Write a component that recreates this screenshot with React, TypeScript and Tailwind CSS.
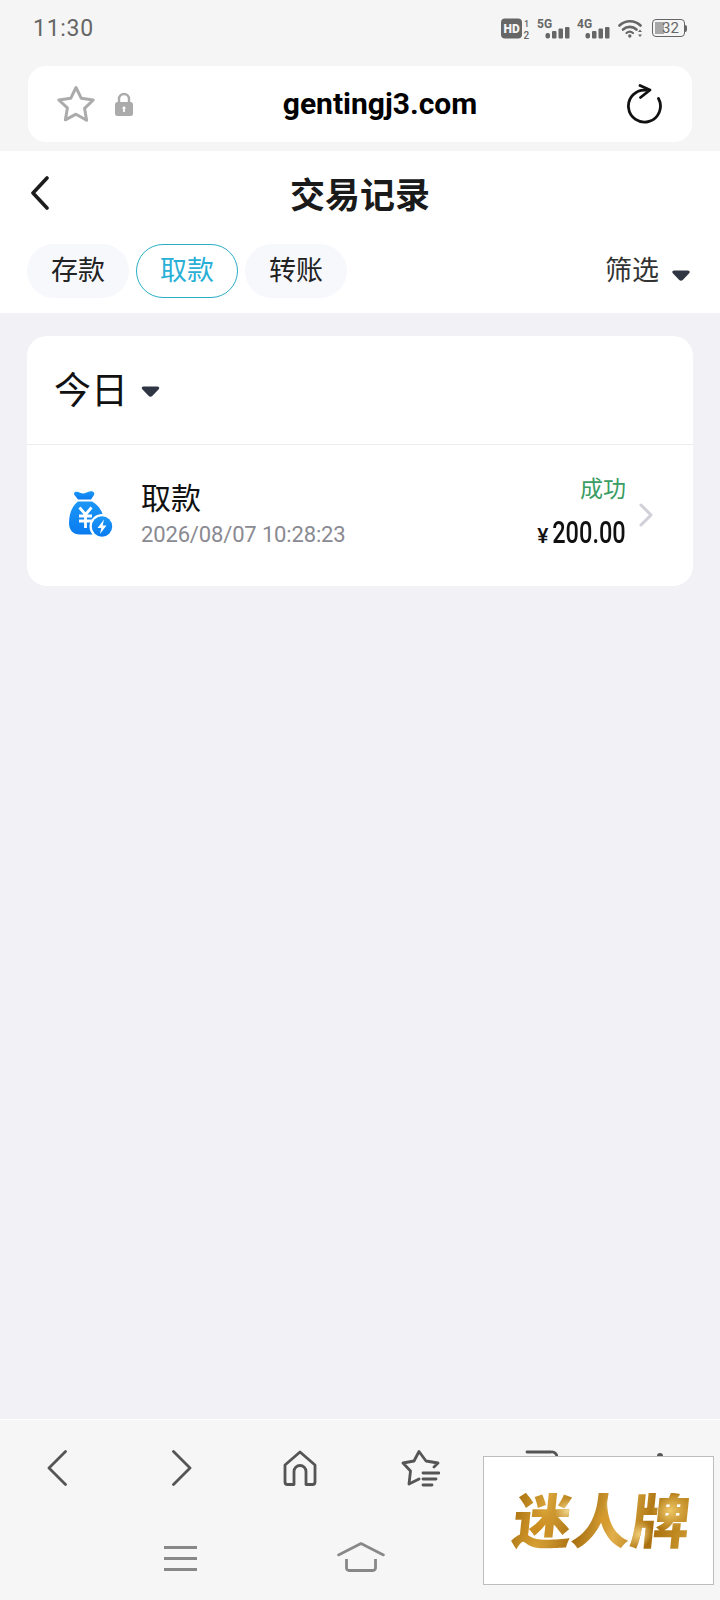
import { useState } from "react";

const tabs = ["存款", "取款", "转账"];

const Caret: React.FC<{ className: string }> = ({ className }) => (
  <svg viewBox="0 0 18 11" className={className}>
    <path d="M2 0.500h14c1.600 0 2.300 1.700 1.200 2.700l-6.200 6.600a2.800 2.800 0 0 1-4 0L.8 3.200C-.3 2.200.4.500 2 .500z" fill="#2f3542" />
  </svg>
);

const Signal: React.FC<{ label: string }> = ({ label }) => (
  <svg viewBox="0 0 33 21" className="w-[33px] h-[21px]">
    <text x="0" y="10" fontSize="12" fontWeight="700" fill="#666" fontFamily="Roboto">{label}</text>
    <rect x="8.500" y="15" width="4.500" height="5.500" rx="2" fill="#666" />
    <rect x="15" y="13" width="4.500" height="7.500" rx="1" fill="#666" />
    <rect x="21.500" y="10.500" width="4.500" height="10" rx="1" fill="#666" />
    <rect x="28" y="9" width="4.500" height="11.500" rx="1" fill="#666" />
  </svg>
);

const StatusIcons: React.FC = () => (
  <div className="flex items-center">
    <svg viewBox="0 0 30 21" className="w-[30px] h-[21px] mr-[6px]">
      <rect x="0" y="0.500" width="21" height="20" rx="4" fill="#666" />
      <text x="2.500" y="15" fontSize="12" fontWeight="900" fill="#f5f5f5" fontFamily="Roboto">HD</text>
      <text x="23" y="9" fontSize="9" fontWeight="500" fill="#666" fontFamily="Roboto">1</text>
      <text x="22.500" y="20.500" fontSize="10" fontWeight="500" fill="#666" fontFamily="Roboto">2</text>
    </svg>
    <Signal label="5G" />
    <div className="w-[7px]" />
    <Signal label="4G" />
    <svg viewBox="0 0 25 20" className="w-[25px] h-[20px] ml-[8px]" fill="none">
      <path d="M1.500 7.500a15 15 0 0 1 21 0" stroke="#666" strokeWidth="2.600" strokeLinecap="round" />
      <path d="M5 11.500a10 10 0 0 1 13.500 0" stroke="#666" strokeWidth="2.600" strokeLinecap="round" />
      <path d="M8.500 15a5 5 0 0 1 6.500 0" stroke="#666" strokeWidth="2.200" strokeLinecap="round" />
      <circle cx="11.800" cy="18" r="1.700" fill="#666" />
      <path d="M22 11.500l2 2.500h-4zM22 19l2-2.500h-4z" fill="#666" />
    </svg>
    <div className="ml-[9px] flex items-center">
      <div className="relative w-[33px] h-[18px] rounded-[4px] border border-[#666] overflow-hidden flex items-center justify-center">
        <div className="absolute left-[2px] top-[2px] bottom-[2px] w-[9px] bg-[#a8a8a8]" />
        <span className="relative text-[15px] leading-none text-[#666] pl-[4px]">32</span>
      </div>
      <div className="w-[2px] h-[7px] bg-[#666] rounded-r-sm" />
    </div>
  </div>
);

const MoneyBag: React.FC = () => (
  <svg viewBox="0 0 46 48" className="w-[46px] h-[48px]">
    <defs>
      <linearGradient id="bag" x1="0" y1="0" x2="0" y2="1">
        <stop offset="0" stopColor="#1b97f7" />
        <stop offset="1" stopColor="#0a7bf0" />
      </linearGradient>
    </defs>
    <path d="M6 1c3-1.200 5.500 1.500 8.500 1.500S21-.8 24 .8c1.500.8 1.500 2.200.8 3.400L22 8.500H9L5.500 4C4.700 3 5 1.500 6 1z" fill="url(#bag)" />
    <path d="M9 10.500h14C31 15 35 23 35 31c0 9-5 12.500-12 12.500H11C4 43.500 0 39 0 32c0-9 3-17 9-21.500z" fill="url(#bag)" />
    <path d="M10.500 16.500l6 7 6-7M10 25h13M10 30h13M16.500 23.500V37" fill="none" stroke="#fff" strokeWidth="2.800" />
    <circle cx="33" cy="35.500" r="12.500" fill="#fff" />
    <circle cx="33" cy="35.500" r="10.200" fill="url(#bag)" />
    <path d="M35 28.500l-6.500 8.500h3.800l-1.300 6 6.500-8.500h-3.800z" fill="#fff" />
  </svg>
);

const App: React.FC = () => {
  const [active] = useState(1);

  return (
    <div className="relative w-[720px] h-[1600px] flex flex-col bg-[#f1f1f6] font-['Roboto','Noto_Sans_CJK_SC',sans-serif] overflow-hidden">
      <div className="bg-[#f5f5f5] h-[151px] shrink-0">
        <div className="h-[66px] pl-[33px] pr-[33px] flex items-center justify-between">
          <span className="text-[23px] leading-none tracking-[0.7px] text-[#666] -mt-[10px]">11:30</span>
          <div className="-mt-[10px]">
            <StatusIcons />
          </div>
        </div>
        <div className="mx-[28px] h-[76px] bg-white rounded-[18px] flex items-center pl-[28px] pr-[29px]">
          <svg viewBox="0 0 40 38" className="w-[40px] h-[38px]" fill="none">
            <path d="M20 2.500l5.300 10.800 11.900 1.700-8.600 8.400 2 11.900L20 29.200 9.400 34.800l2-11.900L2.800 15l11.900-1.700z" stroke="#ababab" strokeWidth="3" strokeLinejoin="round" />
          </svg>
          <svg viewBox="0 0 18 24" className="w-[18px] h-[24px] ml-[19px]">
            <path d="M4 11V7a5 5 0 0 1 10 0v4" fill="none" stroke="#ababab" strokeWidth="2.400" />
            <rect x="0" y="10" width="18" height="14" rx="2.500" fill="#ababab" />
            <path d="M9 14l2.200 2.500H9.900V20H8.100v-3.500H6.800z" fill="#fff" />
          </svg>
          <span className="flex-1 text-center text-[30px] leading-none font-bold text-black">gentingj3.com</span>
          <svg viewBox="0 0 36 40" className="w-[36px] h-[40px] -mt-[1px]" fill="none">
            <path d="M31.500 14.500A16 16 0 1 1 19 6.200" stroke="#111" strokeWidth="2.800" strokeLinecap="round" />
            <path d="M13 1.500l10 4.500-9.500 7.500" stroke="#111" strokeWidth="2.800" strokeLinecap="round" strokeLinejoin="round" />
          </svg>
        </div>
      </div>

      <div className="bg-white h-[162px] shrink-0">
        <div className="relative h-[93px] flex items-center justify-center">
          <svg viewBox="0 0 20 34" className="absolute left-[30px] top-[25px] w-[20px] h-[34px]" fill="none">
            <path d="M17 2L3 17l14 15" stroke="#1c1c1c" strokeWidth="3.600" strokeLinecap="round" strokeLinejoin="round" />
          </svg>
          <h1 className="text-[35px] leading-none font-bold text-[#1a1a1a] mt-[-2px]">交易记录</h1>
        </div>
        <div className="flex items-start pl-[27px] pr-[30px]">
          <div className="flex gap-[7px]">
            {tabs.map((t, i) => (
              <div
                key={t}
                className={
                  i === active
                    ? "w-[102px] h-[54px] rounded-[27px] border border-[#2aaec4] flex items-center justify-center text-[27px] text-[#2ab0d6]"
                    : "w-[102px] h-[54px] rounded-[27px] bg-[#f7f8fc] flex items-center justify-center text-[27px] text-[#222]"
                }
              >
                {t}
              </div>
            ))}
          </div>
          <div className="ml-auto h-[54px] flex items-center">
            <span className="text-[27px] text-[#333]">筛选</span>
            <Caret className="w-[18px] h-[11px] ml-[13px] mt-[8px]" />
          </div>
        </div>
      </div>

      <div className="flex-1 px-[27px] pt-[23px]">
        <div className="bg-white rounded-[20px] h-[250px]">
          <div className="h-[109px] border-b border-[#eeeeee] flex items-center pl-[27px]">
            <span className="text-[37px] leading-none text-[#111] mt-[2px]">今日</span>
            <Caret className="w-[19px] h-[11px] ml-[13px] mt-[3px]" />
          </div>
          <div className="flex items-center h-[140px] pl-[42px] pr-[40px]">
            <MoneyBag />
            <div className="ml-[26px] flex flex-col">
              <span className="text-[30px] leading-[40px] text-[#111] -mt-[3px]">取款</span>
              <span className="text-[22px] leading-[28px] tracking-[-0.15px] text-[#8a8a92] mt-[2px]">2026/08/07 10:28:23</span>
            </div>
            <div className="ml-auto flex flex-col items-end mr-[13px] -mt-[6px]">
              <span className="text-[23px] leading-[32px] text-[#3a9d63]">成功</span>
              <div className="flex items-baseline mt-[10px]">
                <span className="text-[21px] leading-none font-medium text-[#111] mr-[-19px]">¥</span>
                <span className="text-[31px] leading-[34px] font-medium text-[#111] scale-x-[0.76] origin-right">200.00</span>
              </div>
            </div>
            <svg viewBox="0 0 15 24" className="w-[15px] h-[24px] -mr-[1px]" fill="none">
              <path d="M2 2l10 10L2 22" stroke="#d0d0d8" strokeWidth="3" strokeLinecap="round" strokeLinejoin="round" />
            </svg>
          </div>
        </div>
      </div>

      <div className="h-[181px] shrink-0 bg-[#f6f6f6] border-t border-white">
        <div className="h-[112px] flex pt-[30px] pl-[47px]">
          <svg viewBox="0 0 20 36" className="w-[20px] h-[36px]" fill="none">
            <path d="M18.500 1.500L2 18l16.500 16.500" stroke="#555" strokeWidth="2.800" strokeLinecap="round" strokeLinejoin="round" />
          </svg>
          <svg viewBox="0 0 20 36" className="w-[20px] h-[36px] ml-[105px]" fill="none">
            <path d="M1.500 1.500L18 18 1.500 34.500" stroke="#555" strokeWidth="2.800" strokeLinecap="round" strokeLinejoin="round" />
          </svg>
          <svg viewBox="0 0 34 36" className="w-[34px] h-[36px] ml-[91px]" fill="none">
            <path d="M2 15L17 2l15 13v17a2.500 2.500 0 0 1-2.500 2.500H23V21.500a6 6 0 0 0-12 0V34.500H4.500A2.500 2.500 0 0 1 2 32z" stroke="#555" strokeWidth="2.800" strokeLinejoin="round" />
          </svg>
          <svg viewBox="0 0 39 37" className="w-[39px] h-[37px] ml-[84px]" fill="none">
            <path d="M33 17l4-4-12-2L18 1.500 13 11 2 13l7.500 8L8 34l10-5" stroke="#555" strokeWidth="2.800" strokeLinecap="round" strokeLinejoin="round" />
            <path d="M22 23h16M22 29h13M22 35h9" stroke="#555" strokeWidth="2.800" strokeLinecap="round" />
          </svg>
          <svg viewBox="0 0 34 36" className="w-[34px] h-[36px] ml-[85px]" fill="none">
            <path d="M2 2h24a5 5 0 0 1 6 5" stroke="#555" strokeWidth="2.800" strokeLinecap="round" />
            <rect x="2" y="8" width="26" height="26" rx="4" stroke="#555" strokeWidth="2.800" />
          </svg>
          <div className="ml-[98px] mt-[3px] flex flex-col gap-[6px]">
            <div className="w-[6px] h-[6px] rounded-full bg-[#555]" />
            <div className="w-[6px] h-[6px] rounded-full bg-[#555]" />
            <div className="w-[6px] h-[6px] rounded-full bg-[#555]" />
          </div>
        </div>
        <div className="flex items-start pl-[164px]">
          <div className="w-[33px] flex flex-col gap-[8px] mt-[14px]">
            <div className="h-[3px] bg-[#888]" />
            <div className="h-[3px] bg-[#888]" />
            <div className="h-[3px] bg-[#888]" />
          </div>
          <svg viewBox="0 0 48 30" className="w-[48px] h-[30px] ml-[140px] mt-[10px]" fill="none">
            <path d="M1.500 13L24 1.500 46.500 13" stroke="#888" strokeWidth="2.600" strokeLinecap="round" strokeLinejoin="round" />
            <path d="M9.500 17v9a2.500 2.500 0 0 0 2.500 2.500h24a2.500 2.500 0 0 0 2.500-2.500v-9" stroke="#888" strokeWidth="2.800" />
          </svg>
        </div>
      </div>

      {/* watermark sits over the bottom bar */}
      <div className="absolute left-[483px] top-[1456px] w-[231px] h-[129px] bg-white border border-[#bdbdbd] flex items-center justify-center">
        <span className="inline-block -skew-x-6 text-[59px] leading-none font-black ml-[6px] mt-[3px] whitespace-nowrap text-transparent bg-clip-text bg-[radial-gradient(circle_at_14%_60%,#c98a1c_0,transparent_12%),radial-gradient(circle_at_30%_30%,#f3d88e_0,transparent_10%),radial-gradient(circle_at_52%_45%,#d89a2a_0,transparent_14%),radial-gradient(circle_at_56%_20%,#f6dc94_0,transparent_9%),radial-gradient(circle_at_72%_70%,#f0cd78_0,transparent_10%),radial-gradient(circle_at_88%_30%,#efc868_0,transparent_12%),linear-gradient(100deg,#a86f0c_0%,#d9a338_18%,#a9700f_38%,#e2b04a_58%,#a86f0c_78%,#cf9a30_100%)]">
          迷人牌
        </span>
      </div>
    </div>
  );
};

export default App;
